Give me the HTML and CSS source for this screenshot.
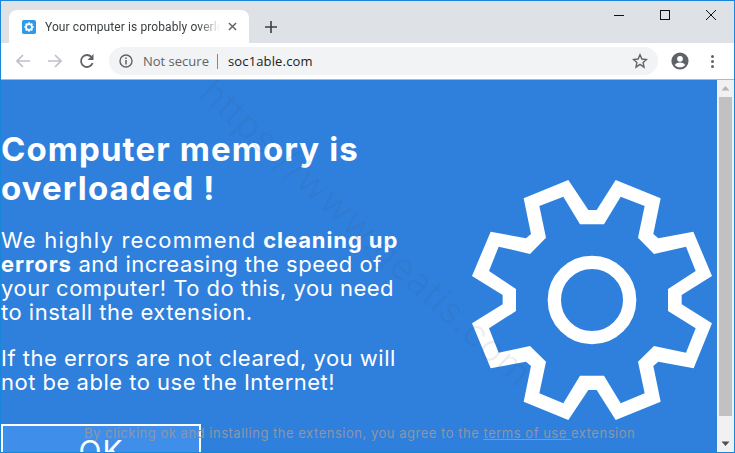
FILE: index.html
```html
<!DOCTYPE html>
<html lang="en">
<head>
    <meta charset="UTF-8">
    <title>Your computer is probably overloaded</title>
    <link rel="stylesheet" href="styles.css">
</head>
<body>
    <div class="window">
        <!-- tab strip -->
        <div class="tabstrip">
            <div class="tab">
                <svg class="favicon" viewBox="0 0 16 16">
                    <rect width="16" height="16" rx="2" fill="#2f9be8"/>
                    <circle cx="8" cy="8" r="3.400" fill="none" stroke="#fff" stroke-width="2"/>
                    <path d="M8 2.600v2M8 11.400v2M2.600 8h2M11.400 8h2M4.200 4.200l1.400 1.400M10.400 10.400l1.400 1.400M4.200 11.800l1.400-1.400M10.400 5.600l1.400-1.400" stroke="#fff" stroke-width="1.800"/>
                </svg>
                <span class="tab-title">Your computer is probably overloaded</span>
                <svg class="tab-close" viewBox="0 0 10 10">
                    <path d="M1 1l8 8M9 1l-8 8" stroke="#5f6368" stroke-width="1.600"/>
                </svg>
            </div>
            <svg class="new-tab" viewBox="0 0 12 12">
                <path d="M6 0v12M0 6h12" stroke="#3c4043" stroke-width="1.600"/>
            </svg>
            <div class="win-controls">
                <svg viewBox="0 0 12 12"><path d="M1 6.500h10" stroke="#111" stroke-width="1"/></svg>
                <svg viewBox="0 0 12 12"><rect x="1.500" y="1.500" width="9" height="9" fill="none" stroke="#111"/></svg>
                <svg viewBox="0 0 12 12"><path d="M1 1l10 10M11 1l-10 10" stroke="#111" stroke-width="1"/></svg>
            </div>
        </div>

        <!-- address bar -->
        <div class="toolbar">
            <svg class="nav-icon" viewBox="0 0 16 16">
                <path d="M15 8H2M8 2L2 8l6 6" fill="none" stroke="#bdc1c6" stroke-width="1.700"/>
            </svg>
            <svg class="nav-icon" viewBox="0 0 16 16">
                <path d="M1 8h13M8 2l6 6-6 6" fill="none" stroke="#bdc1c6" stroke-width="1.700"/>
            </svg>
            <svg class="nav-icon" viewBox="0 0 16 16">
                <path d="M13.600 10.200A6 6 0 1 1 12.400 3.900" fill="none" stroke="#5f6368" stroke-width="1.800"/>
                <path d="M14.500 1v6h-6z" fill="#5f6368"/>
            </svg>
            <div class="omnibox">
                <svg class="info-icon" viewBox="0 0 14 14">
                    <circle cx="7" cy="7" r="6" fill="none" stroke="#5f6368" stroke-width="1.400"/>
                    <path d="M7 6v4.400M7 3.600v1.500" stroke="#5f6368" stroke-width="1.500"/>
                </svg>
                <span class="not-secure">Not secure</span>
                <span class="divider"></span>
                <span class="url">soc1able.com</span>
                <svg class="star" viewBox="0 0 16 16">
                    <path d="M8 1.800l1.900 4.200 4.600.5-3.400 3.100.9 4.500L8 11.400l-4 2.700.9-4.500-3.400-3.100 4.600-.5z" fill="none" stroke="#5f6368" stroke-width="1.400"/>
                </svg>
            </div>
            <svg class="avatar" viewBox="0 0 18 18">
                <circle cx="9" cy="9" r="8.600" fill="#5f6368"/>
                <circle cx="9" cy="6.800" r="2.900" fill="#fff"/>
                <path d="M3.800 13c1.400-2 3.300-2.600 5.200-2.600s3.800.6 5.200 2.600c-1.300 1.500-3.100 2.300-5.200 2.300s-3.900-.8-5.200-2.300z" fill="#fff"/>
            </svg>
            <div class="menu-dots"><i></i><i></i><i></i></div>
        </div>

        <!-- page -->
        <div class="viewport">
            <div class="page">
                <div class="page-text">
                    <h1>Computer memory is overloaded !</h1>
                    <p><span class="lead">We highly recommend</span> <b>cleaning up errors</b> and increasing the speed of your computer! To do this, you need to install the extension.</p>
                    <p>If the errors are not cleared, you will not be able to use the Internet!</p>
                </div>
                <svg class="gear" viewBox="66 45 720 720">
                    <path fill="#fff" fill-rule="evenodd" d="M355 45L415 135H440L497 45L632 100L610 207L625 220L730 200L786 333L695 390V418L786 475L731 610L625 590L610 603L632 710L497 765L440 675H415L355 765L221 710L243 603L228 590L122 610L66 475L158 418V390L66 333L122 200L228 220L243 207L221 100Z M340 95L268 123L288 218L240 267L146 245L117 318L198 372V438L117 490L146 563L240 543L288 590L268 685L340 715L390 632H462L512 715L584 685L564 590L612 543L708 563L737 490L654 438V372L737 318L708 245L612 267L564 218L584 123L512 95L462 178H390Z"/>
                    <circle cx="426" cy="405" r="113" fill="none" stroke="#fff" stroke-width="40"/>
                </svg>
                <a class="ok-btn">OK</a>
                <div class="terms">By clicking ok and installing the extension, you agree to the <u>terms of use </u>extension</div>
                <div class="watermark">https://www.geatis.com</div>
            </div>
            <div class="scrollbar">
                <svg viewBox="0 0 17 17"><path d="M4.500 10.500L8.500 6l4 4.500z" fill="#b5b5b5"/></svg>
                <div class="scroll-thumb"></div>
                <svg class="scroll-down" viewBox="0 0 17 17"><path d="M4.500 6.500L8.500 11l4-4.500z" fill="#505050"/></svg>
            </div>
        </div>
    </div>
</body>
</html>
```

FILE: styles.css
```css
html, body {
    margin: 0;
    padding: 0;
    height: 100%;
    overflow: hidden;
}
.window {
    width: 735px;
    height: 453px;
    box-sizing: border-box;
    border: 1px solid #1a86d9;
    display: flex;
    flex-direction: column;
    font-family: "Open Sans", sans-serif;
}
.tabstrip {
    height: 42px;
    background-color: #dee1e6;
    display: flex;
    align-items: flex-end;
    flex: none;
}
.tab {
    width: 240px;
    height: 33px;
    margin-left: 8px;
    background-color: #fff;
    border-radius: 8px 8px 0 0;
    display: flex;
    align-items: center;
    box-sizing: border-box;
    padding: 0 11px 0 13px;
    flex: none;
}
.favicon {
    width: 14px;
    height: 14px;
    flex: none;
}
.tab-title {
    font-family: Roboto, sans-serif;
    font-size: 12px;
    letter-spacing: 0.1px;
    color: #3c4043;
    margin-left: 9px;
    width: 175px;
    white-space: nowrap;
    overflow: hidden;
    -webkit-mask-image: linear-gradient(to right, #000 88%, transparent);
    mask-image: linear-gradient(to right, #000 88%, transparent);
}
.tab-close {
    width: 9px;
    height: 9px;
    margin-left: 8px;
    flex: none;
}
.new-tab {
    width: 12px;
    height: 12px;
    margin: 0 0 10px 16px;
}
.win-controls {
    margin-left: auto;
    align-self: flex-start;
    display: flex;
    gap: 34px;
    padding: 8px 17px 0 0;
}
.win-controls svg {
    width: 12px;
    height: 12px;
}
.toolbar {
    height: 37px;
    background-color: #fff;
    border-bottom: 1px solid #b5b7bb;
    display: flex;
    align-items: center;
    flex: none;
    padding-left: 14px;
    box-sizing: border-box;
}
.nav-icon {
    width: 16px;
    height: 16px;
    margin-right: 16px;
    flex: none;
}
.nav-icon:nth-child(3) {
    margin-right: 14px;
}
.omnibox {
    width: 549px;
    height: 28px;
    background-color: #f1f3f4;
    border-radius: 14px;
    display: flex;
    align-items: center;
    font-size: 13px;
    padding: 0 10px;
    box-sizing: border-box;
}
.info-icon {
    width: 14px;
    height: 14px;
    flex: none;
}
.not-secure {
    color: #5f6368;
    margin-left: 10px;
}
.divider {
    width: 1px;
    height: 15px;
    background-color: #80868b;
    margin: 0 10px 0 8px;
}
.url {
    color: #202124;
    letter-spacing: 0.15px;
}
.star {
    width: 16px;
    height: 16px;
    margin-left: auto;
}
.avatar {
    width: 18px;
    height: 18px;
    margin-left: 13px;
    flex: none;
}
.menu-dots {
    display: flex;
    flex-direction: column;
    gap: 2px;
    margin-left: 22px;
}
.menu-dots i {
    width: 3px;
    height: 3px;
    border-radius: 50%;
    background-color: #5f6368;
}
.viewport {
    flex: 1;
    display: flex;
    min-height: 0;
}
.page {
    flex: 1;
    background-color: #2f80dd;
    position: relative;
    overflow: hidden;
    font-family: Inter, sans-serif;
    color: #fff;
}
.page-text {
    width: 402px;
    padding-top: 50px;
}
h1 {
    font-size: 33px;
    line-height: 39px;
    font-weight: 700;
    letter-spacing: 1.1px;
    margin: 0 0 20px;
}
.page-text p {
    font-size: 22px;
    line-height: 24px;
    letter-spacing: 0.5px;
    margin: 0 0 22px;
}
.page-text .lead {
    letter-spacing: 1.2px;
}
.page-text b {
    letter-spacing: 0.9px;
}
.gear {
    position: absolute;
    left: 471px;
    top: 100px;
    width: 240px;
    height: 240px;
}
.ok-btn {
    position: absolute;
    left: 0;
    top: 344px;
    width: 196px;
    height: 60px;
    border: 2px solid #fff;
    background-color: #3f8fea;
    text-align: center;
    font-size: 30px;
    letter-spacing: 1px;
    line-height: 50px;
}
.terms {
    position: absolute;
    left: 83px;
    top: 345px;
    font-size: 13px;
    letter-spacing: 0.52px;
    color: #8d96a6;
    white-space: nowrap;
}
.watermark {
    position: absolute;
    left: 150px;
    top: 128px;
    width: 428px;
    text-align: center;
    font-size: 37px;
    font-weight: 300;
    letter-spacing: 1.2px;
    color: rgba(60, 70, 90, 0.1);
    white-space: nowrap;
    transform: rotate(42.5deg);
}
.scrollbar {
    width: 17px;
    background-color: #f1f1f1;
    display: flex;
    flex-direction: column;
    flex: none;
}
.scrollbar svg {
    width: 17px;
    height: 17px;
    flex: none;
}
.scroll-thumb {
    height: 319px;
    margin: 0 2px;
    background-color: #c1c1c1;
}
.scrollbar .scroll-down {
    margin-top: auto;
}
```
